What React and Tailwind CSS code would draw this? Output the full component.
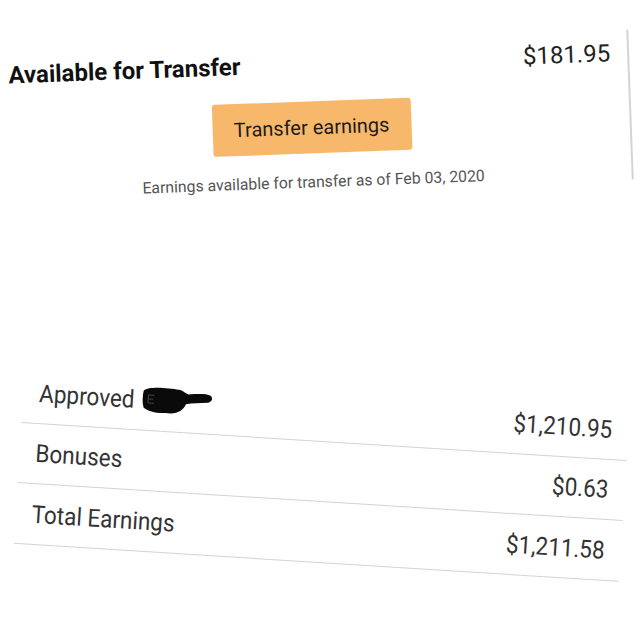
import React from "react";

const rows = [
  { label: "Approved", value: "$1,210.95", redacted: true },
  { label: "Bonuses", value: "$0.63" },
  { label: "Total Earnings", value: "$1,211.58" },
];

function Redaction() {
  return (
    <svg width="72" height="28" viewBox="0 0 72 28" className="ml-[8px] shrink-0">
      <path
        d="M1 5 C 6 0, 26 1, 36 2 C 40 2, 42 5, 46 6 C 55 5, 64 4, 68 6 C 71 8, 70 12, 66 13 C 58 14, 50 14, 44 16 C 42 22, 36 27, 24 26 C 14 27, 6 25, 2 22 C 0 17, 0 10, 1 5 Z"
        fill="#0a0a0a"
      />
      <path d="M6 9 H12 M6 13 H11 M6 17 H12 M6 9 V17" stroke="#3a3a3a" strokeWidth="1.2" fill="none" />
    </svg>
  );
}

export default function App() {
  return (
    <div
      className="w-[640px] h-[640px] overflow-hidden bg-white"
      style={{ fontFamily: "Roboto, 'Liberation Sans', sans-serif" }}
    >
      {/* Top section */}
      <div className="flex h-[220px] w-[640px] rotate-[-2.1deg]">
        <div className="flex-1 pl-[10px] pr-[17px] pt-[50px]">
          <div className="flex items-center justify-between">
            <div className="text-[24px] leading-[28px] font-bold text-[#111]">Available for Transfer</div>
            <div className="text-[24px] leading-[28px] text-[#222]">$181.95</div>
          </div>
          <div className="mt-[23px] flex justify-center">
            <button className="flex h-[52px] w-[199px] items-center justify-center rounded-[3px] bg-[#f7b86b] text-[20px] text-[#1c1c1c]">
              Transfer earnings
            </button>
          </div>
          <div className="mt-[19px] text-center text-[15.8px] leading-[20px] text-[#555]">
            Earnings available for transfer as of Feb 03, 2020
          </div>
        </div>
        <div className="mr-[9px] mt-[41px] h-[150px] w-[2px] bg-[#d4d4d4]" />
      </div>

      {/* Bottom section */}
      <div className="ml-[19px] mt-[161px] w-[606px] rotate-[3.6deg]">
        {rows.map((r) => (
          <div
            key={r.label}
            className="flex h-[60.5px] items-center justify-between border-b-[1.5px] border-[#d3d3d3] px-4"
          >
            <div className="flex items-center">
              <span className="inline-block scale-y-[1.1] text-[22.5px] leading-[26px] text-[#333]">{r.label}</span>
              {r.redacted && <Redaction />}
            </div>
            <span className="inline-block scale-y-[1.1] text-[22.5px] leading-[26px] text-[#333]">{r.value}</span>
          </div>
        ))}
      </div>
    </div>
  );
}
